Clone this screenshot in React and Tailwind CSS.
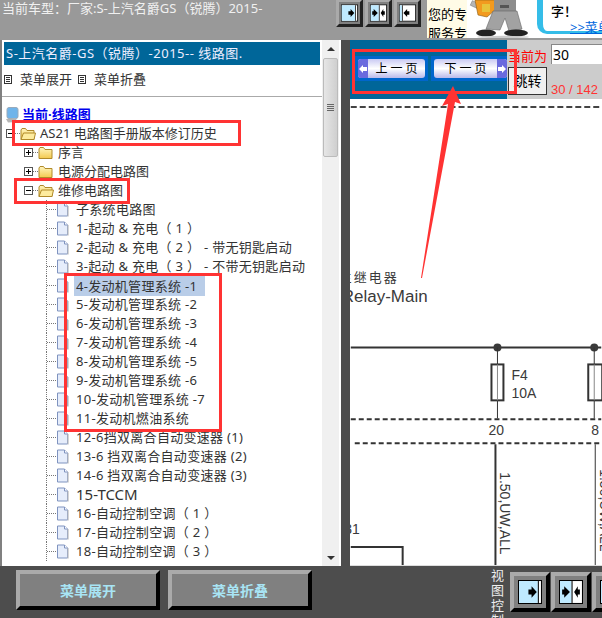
import React from 'react';

const TREE_FILES = [
  '子系统电路图',
  '1-起动 & 充电（ 1 ）',
  '2-起动 & 充电（ 2 ） - 带无钥匙启动',
  '3-起动 & 充电（ 3 ） - 不带无钥匙启动',
  '4-发动机管理系统 -1',
  '5-发动机管理系统 -2',
  '6-发动机管理系统 -3',
  '7-发动机管理系统 -4',
  '8-发动机管理系统 -5',
  '9-发动机管理系统 -6',
  '10-发动机管理系统 -7',
  '11-发动机燃油系统',
  '12-6挡双离合自动变速器 (1)',
  '13-6 挡双离合自动变速器 (2)',
  '14-6 挡双离合自动变速器 (3)',
  '15-TCCM',
  '16-自动控制空调（ 1 ）',
  '17-自动控制空调（ 2 ）',
  '18-自动控制空调（ 3 ）',
];

const ViewGlyph = ({ mode }) => (
  <svg viewBox="0 0 23 23" className="w-full h-full block">
    <rect x="0.5" y="0.5" width="22" height="22" fill="#fff" stroke="#000" />
    {mode === 'left' && <rect x="1" y="1" width="18" height="21" fill="#bfeaff" />}
    {mode === 'left' && <rect x="19" y="1" width="1" height="21" fill="#000" />}
    {mode === 'left' && <polygon points="10,9 13,9 13,6 18,11.5 13,17 13,14 10,14" fill="#000" />}
    {mode === 'both' && <rect x="1" y="1" width="11" height="21" fill="#bfeaff" />}
    {mode === 'both' && <rect x="12" y="1" width="1" height="21" fill="#000" />}
    {mode === 'both' && <polygon points="3,9 5,9 5,6 10.5,11.5 5,17 5,14 3,14" fill="#000" />}
    {mode === 'both' && <polygon points="20,9 18,9 18,6 14.5,11.5 18,17 18,14 20,14" fill="#000" />}
    {mode === 'right' && <rect x="1" y="1" width="3" height="21" fill="#bfeaff" />}
    {mode === 'right' && <rect x="4" y="1" width="1" height="21" fill="#000" />}
    {mode === 'right' && <polygon points="14,9 11,9 11,6 6,11.5 11,17 11,14 14,14" fill="#000" />}
  </svg>
);

const SmallViewButton = ({ mode }) => (
  <div className="w-[27px] h-[28px] border-[3px] border-t-[#aaa] border-l-[#aaa] border-r-[#222] border-b-[#222] bg-[#808080] p-[2px] shrink-0">
    <ViewGlyph mode={mode} />
  </div>
);

const LargeViewButton = ({ mode }) => (
  <div className="w-[40px] h-[40px] border-[4px] border-t-[#aaa] border-l-[#aaa] border-r-black border-b-black bg-[#808080] p-[4px] shrink-0">
    <ViewGlyph mode={mode} />
  </div>
);

const Folder = ({ open }) => (
  <svg viewBox="0 0 16 14" className="w-[16px] h-[14px] shrink-0">
    <defs>
      <linearGradient id="folderFill" x1="0" y1="0" x2="0" y2="1">
        <stop offset="0" stopColor="#fff6c0" />
        <stop offset="1" stopColor="#f3c94e" />
      </linearGradient>
    </defs>
    <path d="M1 3 L1 12.5 L14 12.5 L14 3.5 L7 3.5 L5.5 1.5 L2 1.5 Z" fill="url(#folderFill)" stroke="#b08a2a" />
    {open && <path d="M1 12.5 L3.5 6 L15.5 6 L14 12.5 Z" fill="#fdeb9e" stroke="#b08a2a" />}
  </svg>
);

const FileIcon = () => (
  <svg viewBox="0 0 13 15" className="w-[13px] h-[15px] shrink-0">
    <path d="M1.5 1 L8.5 1 L11.5 4 L11.5 14 L1.5 14 Z" fill="#e6edfb" stroke="#7f93bf" />
    <path d="M8.5 1 L8.5 4 L11.5 4" fill="#fff" stroke="#7f93bf" />
    <rect x="11.5" y="4" width="1.2" height="10.5" fill="#c3c3c3" />
  </svg>
);

const Toggle = ({ open }) => (
  <span className="w-[9px] h-[9px] border border-[#555] bg-white flex items-center justify-center relative shrink-0">
    <span className="w-[5px] h-px bg-black" />
    {!open && <span className="absolute w-px h-[5px] bg-black" />}
  </span>
);

const DotsH = ({ w }) => <span className={`${w} border-t border-dotted border-[#777] shrink-0`} />;

const FolderRow = ({ label, open, root }) => (
  <div className={root ? 'flex items-center h-[19px] pl-[4px]' : 'flex items-center h-[19px] pl-[22px]'}>
    <Toggle open={open} />
    <DotsH w="w-[5px]" />
    <Folder open={open} />
    <span className="ml-[4px] whitespace-nowrap">{label}</span>
  </div>
);

const FileRow = ({ label, active }) => (
  <div className="flex items-center h-[19px] pl-[44px]">
    <span className="w-[10px] h-full border-l border-dotted border-[#777] flex items-center shrink-0">
      <span className="w-full border-t border-dotted border-[#777]" />
    </span>
    <FileIcon />
    <span className={active ? 'ml-[5px] px-[2px] h-[20px] leading-[20px] w-[131px] bg-[#b9cde8] whitespace-nowrap tracking-[0.3px]' : label === '15-TCCM' ? 'ml-[5px] px-[2px] whitespace-nowrap text-[15px]' : 'ml-[5px] px-[2px] whitespace-nowrap tracking-[0.3px]'}>
      {label}
    </span>
  </div>
);

const MenuGlyph = () => (
  <span className="w-[8px] h-[9px] border border-[#333] flex flex-col justify-center gap-px px-px shrink-0">
    <span className="h-px bg-[#333]" />
    <span className="h-px bg-[#333]" />
    <span className="h-px bg-[#333]" />
  </span>
);

const Scrollbar = () => (
  <div className="w-[18px] h-full bg-[#f0f0f0] flex flex-col items-center pt-[7px] pb-[6px]">
    <span className="w-0 h-0 border-x-[4px] border-x-transparent border-b-[4px] border-b-[#333]" />
    <div className="w-[15px] h-[99px] mt-[7px] bg-gradient-to-r from-[#e6e6e6] to-[#cfcfcf] border border-[#bbb] rounded-[2px] flex flex-col items-center justify-center gap-px">
      <span className="w-[7px] h-px bg-[#666]" />
      <span className="w-[7px] h-px bg-[#666]" />
      <span className="w-[7px] h-px bg-[#666]" />
      <span className="w-[7px] h-px bg-[#666]" />
    </div>
    <span className="mt-auto w-0 h-0 border-x-[4px] border-x-transparent border-t-[4px] border-t-[#333]" />
  </div>
);

const PageArrow = ({ dir }) => (
  <span className="w-[10px] h-full bg-[#6a6ade] flex items-center justify-center shrink-0">
    <svg viewBox="0 0 8 8" className="w-[8px] h-[8px]">
      {dir === 'prev'
        ? <polygon points="0,4 4,0 4,2 8,2 8,6 4,6 4,8" fill="#fff" />
        : <polygon points="8,4 4,0 4,2 0,2 0,6 4,6 4,8" fill="#fff" />}
    </svg>
  </span>
);

const PageButton = ({ label, dir }) => (
  <div className="h-[25px] bg-[#0066cc] p-[3px] flex shrink-0">
    <div className={dir === 'prev' ? 'w-[67px] h-full rounded-[3px] bg-gradient-to-b from-[#c9c9f2] via-white to-[#b9b9ea] flex items-center overflow-hidden' : 'w-[73px] h-full rounded-[3px] bg-gradient-to-b from-[#c9c9f2] via-white to-[#b9b9ea] flex items-center overflow-hidden'}>
      {dir === 'prev' && <PageArrow dir="prev" />}
      <span className="flex-1 text-center text-[12px] text-black whitespace-pre">{label}</span>
      {dir === 'next' && <PageArrow dir="next" />}
    </div>
  </div>
);

// mechanic cartoon from the banner
const Mechanic = () => (
  <svg viewBox="0 0 64 38" className="w-[64px] h-[38px] shrink-0">
    <rect x="4" y="3" width="12" height="5" fill="#b5b5b5" stroke="#777" strokeWidth="0.5" transform="rotate(25 10 5)" />
    <path d="M8 0 L30 0 L28 10 L20 17 L11 15 Z" fill="#f29a1f" stroke="#8a5a10" strokeWidth="0.6" />
    <rect x="15" y="4" width="8" height="8" fill="#e8c33a" />
    <path d="M27 0 L49 0 L49 12 L27 12 Z" fill="#8d8d8d" />
    <rect x="33" y="5" width="9" height="3" fill="#555" />
    <path d="M26 11 L50 11 L55 29 L42 31 L38 18 L33 30 L19 29 Z" fill="#a2a2a2" stroke="#666" strokeWidth="0.6" />
    <ellipse cx="19" cy="33" rx="10" ry="3.5" fill="#222" />
    <ellipse cx="49" cy="33" rx="12" ry="3.5" fill="#222" />
    <ellipse cx="36" cy="37" rx="26" ry="1.2" fill="#ccc" />
  </svg>
);

const Circuit = () => (
  <svg viewBox="351 99 251 467" className="w-full h-full block" fontFamily="Liberation Sans, Noto Sans CJK SC, sans-serif" fill="#3a3a3a">
    <line x1="351" y1="107" x2="602" y2="107" stroke="#444" strokeWidth="2" strokeDasharray="6 3" />
    <text x="399" y="282" fontSize="13" textAnchor="end" letterSpacing="2">主继电器</text>
    <text x="428" y="302" fontSize="17" textAnchor="end">Relay-Main</text>
    <line x1="351" y1="348" x2="602" y2="348" stroke="#333" strokeWidth="2" />
    <circle cx="498" cy="348" r="4" />
    <circle cx="595" cy="348" r="4" />
    <line x1="498" y1="348" x2="498" y2="419" stroke="#333" />
    <line x1="595" y1="348" x2="595" y2="419" stroke="#333" />
    <rect x="492" y="365" width="12" height="36" fill="#fff" stroke="#333" strokeWidth="2" />
    <line x1="498" y1="365" x2="498" y2="401" stroke="#888" />
    <rect x="589" y="365" width="14" height="36" fill="#fff" stroke="#333" strokeWidth="2" />
    <line x1="595" y1="365" x2="595" y2="401" stroke="#888" />
    <text x="512" y="381" fontSize="14">F4</text>
    <text x="512" y="399" fontSize="14">10A</text>
    <line x1="351" y1="420" x2="602" y2="420" stroke="#333" strokeWidth="2" strokeDasharray="5 3" />
    <text x="489" y="436" fontSize="14">20</text>
    <text x="592" y="436" fontSize="14">8</text>
    <line x1="355" y1="444" x2="602" y2="444" stroke="#333" strokeWidth="2" strokeDasharray="5 3" />
    <line x1="496" y1="445" x2="496" y2="566" stroke="#333" strokeWidth="2" />
    <line x1="596" y1="445" x2="596" y2="566" stroke="#333" />
    <text transform="translate(501 473) rotate(90)" fontSize="14">1.50,UW,ALL</text>
    <text transform="translate(601 470) rotate(90)" fontSize="14">1.50,UW,ALL</text>
    <text x="360" y="535" fontSize="14" textAnchor="end">31</text>
    <path d="M351 548 L403 548 L403 566" fill="none" stroke="#333" strokeWidth="2" />
  </svg>
);

export default function App() {
  return (
    <div className="relative w-[602px] h-[618px] bg-[#4d4d4d] overflow-hidden flex flex-col font-['Noto_Sans','Noto_Sans_CJK_SC',sans-serif] text-[13px] text-[#333]">
      {/* header */}
      <div className="h-[40px] bg-[#999] flex shrink-0">
        <div className="w-[336px] pl-[2px] text-[#f0f0f0] leading-[17px] whitespace-nowrap shrink-0">当前车型：厂家:S-上汽名爵GS（锐腾）2015-</div>
        <div className="flex gap-[2px] w-[91px] shrink-0 -mt-px">
          <SmallViewButton mode="left" />
          <SmallViewButton mode="both" />
          <SmallViewButton mode="right" />
        </div>
        <div className="h-[38px] flex-1 flex bg-white overflow-hidden">
          <div className="w-[40px] bg-[#fffbe6] pl-px text-black leading-[19px] pt-[5px] shrink-0 overflow-hidden">
            <div className="whitespace-nowrap">您的专</div>
            <div className="whitespace-nowrap">服务专</div>
          </div>
          <Mechanic />
          <div className="flex-1 pl-[6px]">
            <div className="h-[34px] border-l-[6px] border-b-[3px] border-[#35bde8] rounded-bl-[10px] pl-[8px] leading-[15px] text-black flex flex-col">
              <div className="pt-[4px] font-medium whitespace-nowrap">字！</div>
              <div className="ml-[19px] mt-[1px] text-[#0066dd] underline whitespace-nowrap">&gt;&gt;菜单</div>
            </div>
          </div>
        </div>
      </div>

      {/* main */}
      <div className="flex h-[526px] shrink-0">
        {/* left tree panel */}
        <div className="w-[341px] h-full bg-white border-l-2 border-[#808080] border-r-2 border-r-white flex shrink-0">
          <div className="w-[320px] pt-[2px] overflow-hidden shrink-0">
            <div className="ml-[2px] h-[23px] w-[316px] bg-[#006699] text-[#eef] leading-[23px] pl-[2px] whitespace-nowrap tracking-[0.5px]">S-上汽名爵-GS（锐腾）-2015-- 线路图.</div>
            <div className="flex items-center h-[32px] border-b border-[#aaa] pl-[2px] pb-[2px]">
              <MenuGlyph />
              <span className="ml-[8px]">菜单展开</span>
              <span className="ml-[6px]"><MenuGlyph /></span>
              <span className="ml-[8px]">菜单折叠</span>
            </div>
            <div className="pt-[8px]">
              <div className="flex items-center h-[19px] pl-[3px]">
                <svg viewBox="0 0 14 16" className="w-[14px] h-[16px] shrink-0">
                  <rect x="2" y="0.5" width="11" height="11" rx="2" fill="#6fb4ea" stroke="#9ab" />
                  <path d="M1 12 L11 11 L12 15 L3 15.5 Z" fill="#b5b5b5" />
                </svg>
                <span className="ml-[3px] font-bold text-[#0000ee] underline">当前·线路图</span>
              </div>
              <FolderRow root open label="AS21 电路图手册版本修订历史" />
              <FolderRow label="序言" />
              <FolderRow label="电源分配电路图" />
              <FolderRow open label="维修电路图" />
              {TREE_FILES.map((f, i) => (
                <FileRow key={f} label={f} active={i === 4} />
              ))}
            </div>
          </div>
          <Scrollbar />
        </div>

        <div className="w-[9px] shrink-0" />

        {/* right page panel */}
        <div className="flex-1 h-full flex flex-col bg-white">
          <div className="h-[59px] flex shrink-0">
            <div className="w-[157px] bg-[#006699] flex gap-[3px] pt-[16px] pl-[5px] shrink-0 overflow-hidden">
              <PageButton dir="prev" label="上 一 页" />
              <PageButton dir="next" label="下 一 页" />
            </div>
            <div className="flex-1 bg-[#ccc]">
              <div className="flex items-start h-[27px] pt-[4px]">
                <span className="mt-[4px] ml-px w-[43px] text-[#f00] leading-[16px] whitespace-nowrap">当前为</span>
                <div className="flex-1 h-[20px] bg-white border-t border-l border-[#888] text-black text-[14px] leading-[20px] pl-px">30</div>
              </div>
              <div className="flex items-start">
                <div className="w-[39px] h-[28px] ml-px bg-[#f0f0f0] border border-[#333] text-black text-center leading-[26px] text-[14px]">跳转</div>
                <span className="ml-[4px] mt-[15px] font-['Liberation_Sans'] text-[#f33] text-[13px] whitespace-nowrap leading-[16px]">30 / 142</span>
              </div>
            </div>
          </div>
          <div className="flex-1 min-h-0 border-b border-[#ddd]">
            <Circuit />
          </div>
        </div>
      </div>

      {/* footer */}
      <div className="flex-1 flex pl-[16px] pt-[4px]">
        <div className="w-[144px] h-[40px] border-[4px] border-t-[#aaa] border-l-[#aaa] border-r-black border-b-black bg-[#808080] text-[#a8e4f4] font-bold text-[14px] flex items-center justify-center shrink-0">菜单展开</div>
        <div className="ml-[8px] w-[144px] h-[40px] border-[4px] border-t-[#aaa] border-l-[#aaa] border-r-black border-b-black bg-[#808080] text-[#a8e4f4] font-bold text-[14px] flex items-center justify-center shrink-0">菜单折叠</div>
        <div className="ml-[179px] w-[13px] text-[#eee] leading-[15px] -mt-[2px] shrink-0">视图控制</div>
        <div className="ml-[6px] flex gap-px shrink-0 pt-[2px]">
          <LargeViewButton mode="left" />
          <LargeViewButton mode="both" />
          <LargeViewButton mode="right" />
        </div>
      </div>

      {/* red annotations drawn over the screenshot */}
      <div className="absolute left-[12px] top-[120px] w-[229px] h-[26px] border-[3px] border-[#f33]" />
      <div className="absolute left-[14px] top-[178px] w-[116px] h-[26px] border-[3px] border-[#f33]" />
      <div className="absolute left-[64px] top-[273px] w-[158px] h-[159px] border-[3px] border-[#f33]" />
      <div className="absolute left-[352px] top-[49px] w-[165px] h-[45px] border-[3px] border-[#f33]" />
      <svg className="absolute left-[415px] top-[84px] w-[50px] h-[196px]" viewBox="415 84 50 196">
        <polygon points="421,278 448,104 442,106 453,86 461,104 455,102 422,278" fill="#f33" />
      </svg>
    </div>
  );
}
